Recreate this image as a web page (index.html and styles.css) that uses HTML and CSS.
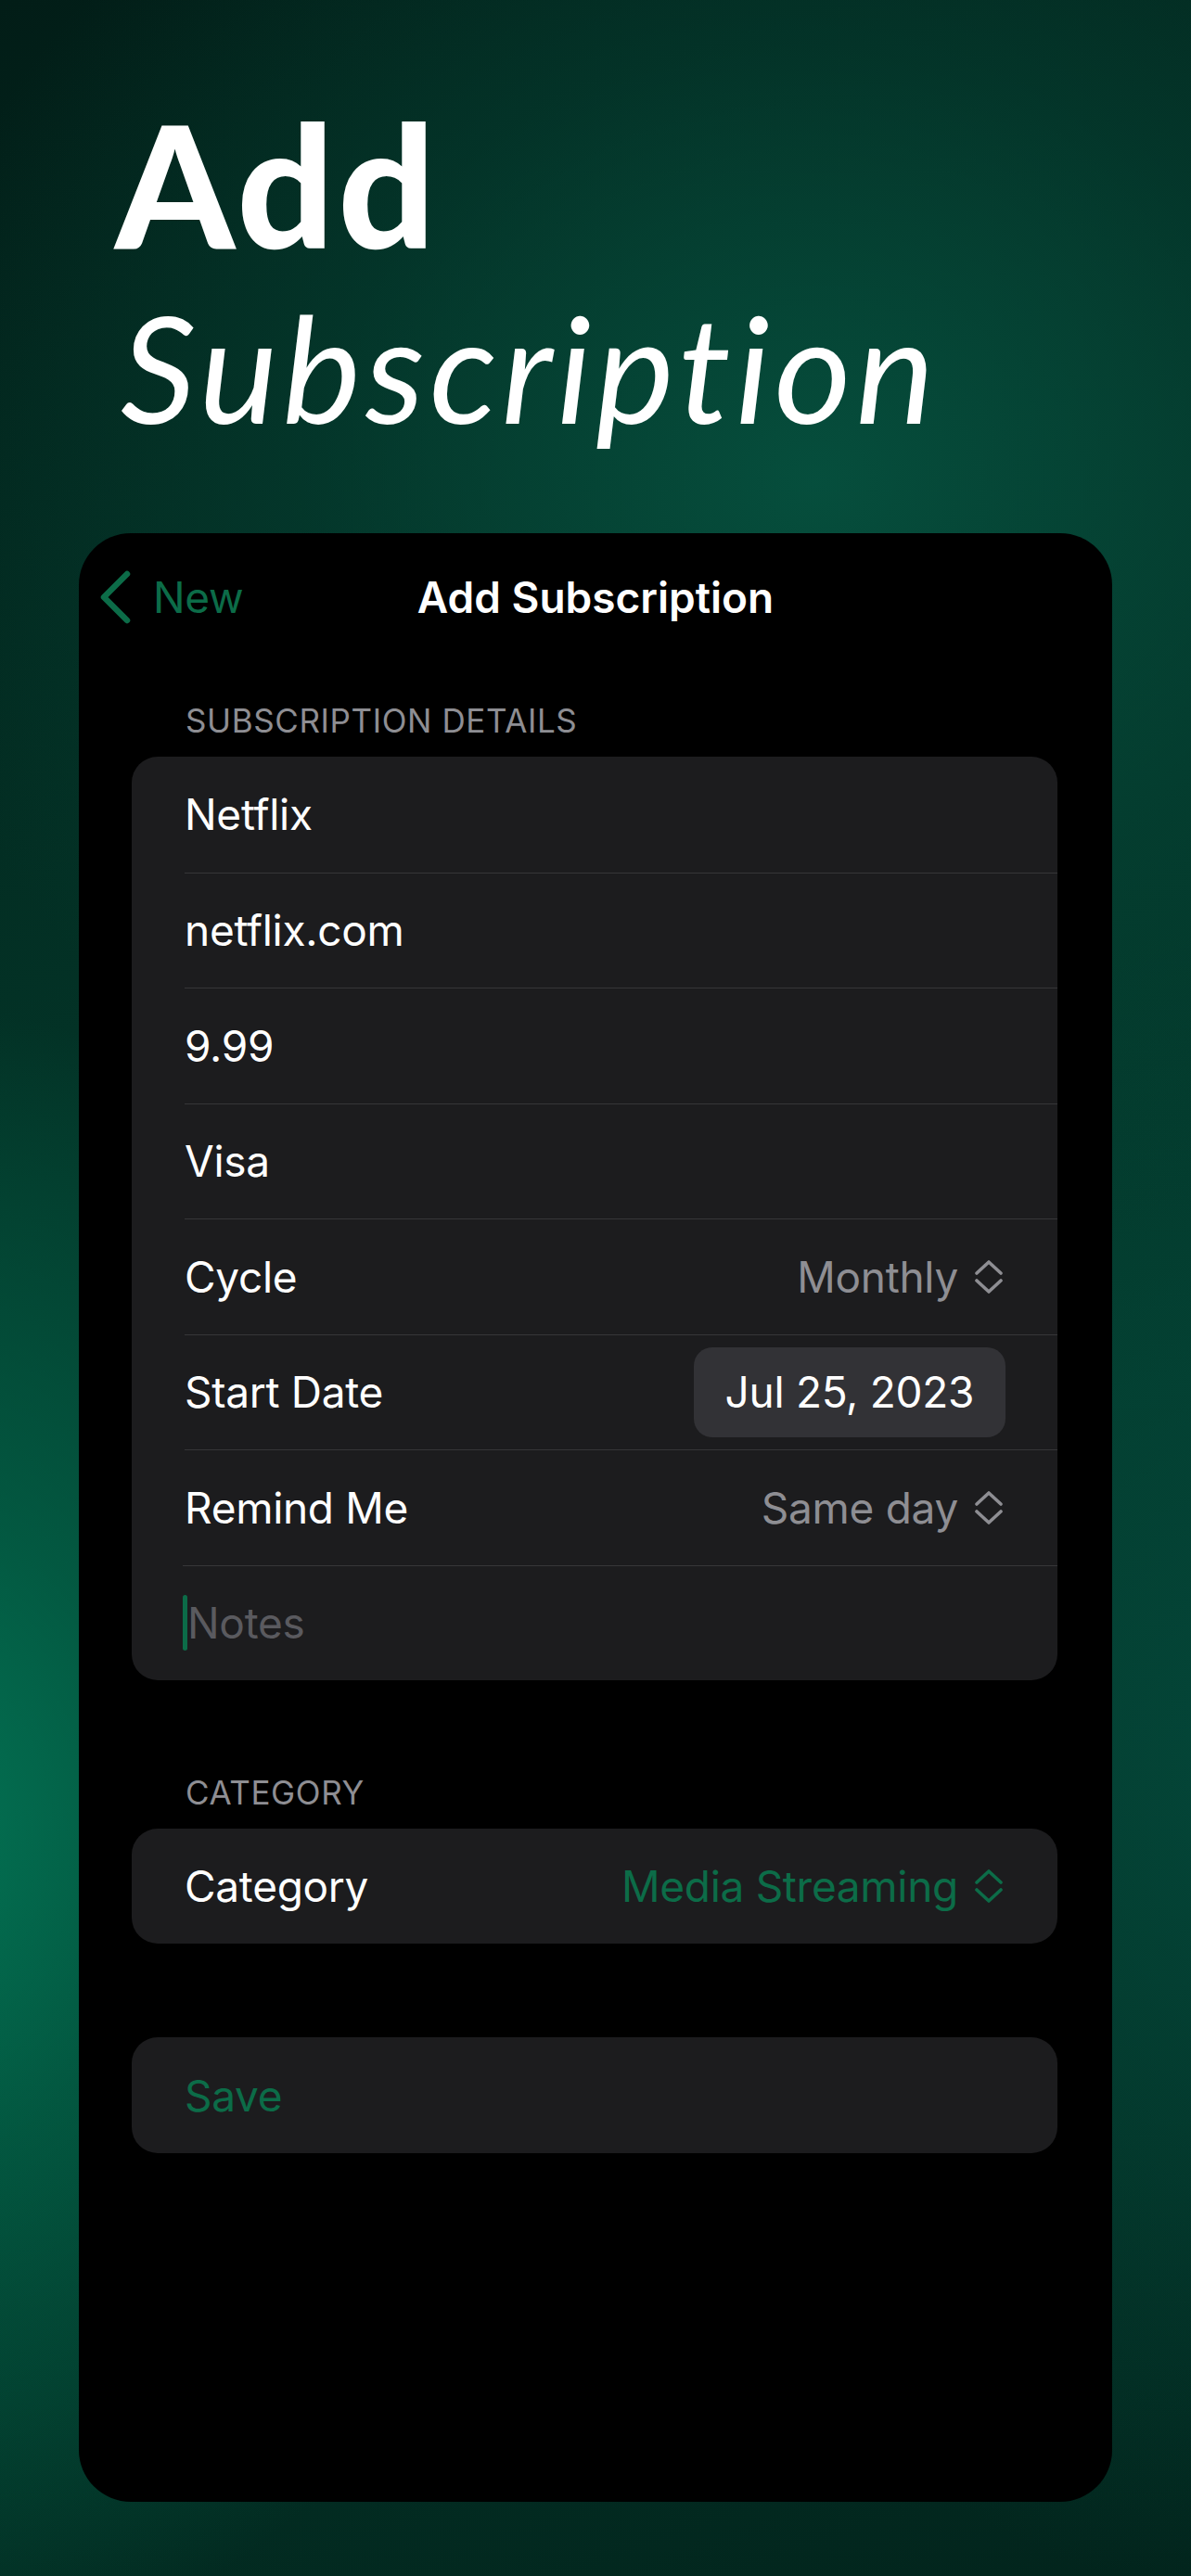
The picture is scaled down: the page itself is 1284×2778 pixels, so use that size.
FILE: index.html
```html
<!DOCTYPE html>
<html lang="en">
<head>
<meta charset="utf-8">
<title>Add Subscription</title>
<link rel="stylesheet" href="styles.css">
</head>
<body>
<div class="page">
  <h1 class="hero">
    <span class="hero-bold">Add</span>
    <span class="hero-italic">Subscription</span>
  </h1>

  <div class="card">
    <div class="nav">
      <div class="back">
        <svg class="back-icon" width="40" height="60" viewBox="0 0 40 60"><path d="M33 5 L8 30 L33 55" fill="none" stroke="#0c6c48" stroke-width="6.5" stroke-linecap="round" stroke-linejoin="round"/></svg>
        <span>New</span>
      </div>
      <div class="nav-title">Add Subscription</div>
      <div></div>
    </div>

    <div class="section first">
      <div class="section-header">SUBSCRIPTION DETAILS</div>
      <div class="group">
        <div class="row"><span>Netflix</span></div>
        <div class="row"><span>netflix.com</span></div>
        <div class="row"><span>9.99</span></div>
        <div class="row"><span>Visa</span></div>
        <div class="row">
          <span>Cycle</span>
          <span class="value">Monthly
            <svg class="updown" width="32" height="36" viewBox="0 0 32 36"><path d="M3 14 L16 2 L29 14 M3 22 L16 34 L29 22" fill="none" stroke="#8e8e93" stroke-width="3.6" stroke-linecap="round" stroke-linejoin="round"/></svg>
          </span>
        </div>
        <div class="row">
          <span>Start Date</span>
          <span class="pill">Jul 25, 2023</span>
        </div>
        <div class="row">
          <span>Remind Me</span>
          <span class="value">Same day
            <svg class="updown" width="32" height="36" viewBox="0 0 32 36"><path d="M3 14 L16 2 L29 14 M3 22 L16 34 L29 22" fill="none" stroke="#8e8e93" stroke-width="3.6" stroke-linecap="round" stroke-linejoin="round"/></svg>
          </span>
        </div>
        <div class="row notes"><span class="caret"></span><span class="placeholder">Notes</span></div>
      </div>
    </div>

    <div class="section second">
      <div class="section-header">CATEGORY</div>
      <div class="group">
        <div class="row">
          <span>Category</span>
          <span class="value green">Media Streaming
            <svg class="updown" width="32" height="36" viewBox="0 0 32 36"><path d="M3 14 L16 2 L29 14 M3 22 L16 34 L29 22" fill="none" stroke="#0c6c48" stroke-width="3.6" stroke-linecap="round" stroke-linejoin="round"/></svg>
          </span>
        </div>
      </div>
    </div>

    <div class="section third">
      <div class="group">
        <div class="row save"><span>Save</span></div>
      </div>
    </div>
  </div>
</div>
</body>
</html>
```

FILE: styles.css
```css
* {
  box-sizing: border-box;
  margin: 0;
  padding: 0;
}

html, body {
  width: 1284px;
  height: 2778px;
}

body {
  font-family: Inter, "Noto Sans", sans-serif;
  overflow: hidden;
  background:
    radial-gradient(ellipse 760px 900px at -120px 1980px, rgba(3, 118, 86, 1) 0%, rgba(3, 110, 80, 0.6) 40%, rgba(3, 100, 72, 0) 100%),
    radial-gradient(ellipse 1000px 850px at 880px 520px, rgba(6, 80, 62, 0.95) 0%, rgba(5, 70, 55, 0.45) 55%, rgba(5, 70, 55, 0) 100%),
    radial-gradient(ellipse 700px 900px at 1350px 1900px, rgba(4, 72, 58, 0.9) 0%, rgba(4, 72, 58, 0) 100%),
    linear-gradient(160deg, #021d17 0%, #033528 40%, #033a2c 60%, #02241c 100%);
}

.page {
  display: flex;
  flex-direction: column;
  height: 2778px;
}

.hero {
  padding: 102px 0 0 124px;
  color: #ffffff;
  font-family: Lato, "Noto Sans", sans-serif;
  font-weight: normal;
  font-variant-ligatures: none;
}

.hero-bold {
  display: block;
  font-size: 184px;
  font-weight: 900;
  line-height: 189px;
  letter-spacing: 4px;
}

.hero-italic {
  display: block;
  padding-left: 6px;
  font-size: 160px;
  font-style: italic;
  font-weight: 400;
  line-height: 208px;
  letter-spacing: 5px;
}

.card {
  margin: 76px 85px 0;
  height: 2123px;
  background: #000000;
  border-radius: 56px;
  display: flex;
  flex-direction: column;
}

.nav {
  height: 138px;
  display: grid;
  grid-template-columns: 1fr auto 1fr;
  align-items: center;
  padding: 0 19px;
}

.back {
  display: flex;
  align-items: center;
  gap: 21px;
  color: #0c6c48;
  font-size: 46px;
  letter-spacing: -0.3px;
}

.back-icon {
  display: block;
}

.nav-title {
  color: #ffffff;
  font-size: 46px;
  font-weight: 600;
  letter-spacing: 0;
}

.section {
  padding: 0 59px 0 57px;
}

.section.first {
  margin-top: 43px;
}

.section.second {
  margin-top: 100px;
}

.section.third {
  margin-top: 101px;
}

.section-header {
  font-size: 35px;
  line-height: 42px;
  color: #8e8e93;
  padding-left: 58px;
  margin-bottom: 18px;
  letter-spacing: 0.6px;
}

.group {
  background: #1c1c1e;
  border-radius: 28px;
  overflow: hidden;
}

.row {
  height: 124.5px;
  margin-left: 57px;
  padding-right: 58px;
  display: flex;
  align-items: center;
  justify-content: space-between;
  color: #ffffff;
  font-size: 46px;
  letter-spacing: -0.3px;
}

.row + .row {
  border-top: 1px solid #363638;
}

.value {
  display: flex;
  align-items: center;
  gap: 17px;
  color: #8e8e93;
}

.value.green {
  color: #0c6c48;
}

.updown {
  display: block;
}

.pill {
  height: 97px;
  padding: 0 34px;
  margin-right: -2px;
  display: flex;
  align-items: center;
  background: #323236;
  border-radius: 20px;
  color: #ffffff;
}

.notes {
  justify-content: flex-start;
  margin-left: 55px;
}

.second .row {
  height: 124px;
}

.caret {
  display: block;
  width: 5px;
  height: 60px;
  background: #0c6c48;
  border-radius: 3px;
}

.placeholder {
  color: #5a5a5f;
}

.third .row.save {
  height: 125px;
  color: #0c6c48;
}
```
